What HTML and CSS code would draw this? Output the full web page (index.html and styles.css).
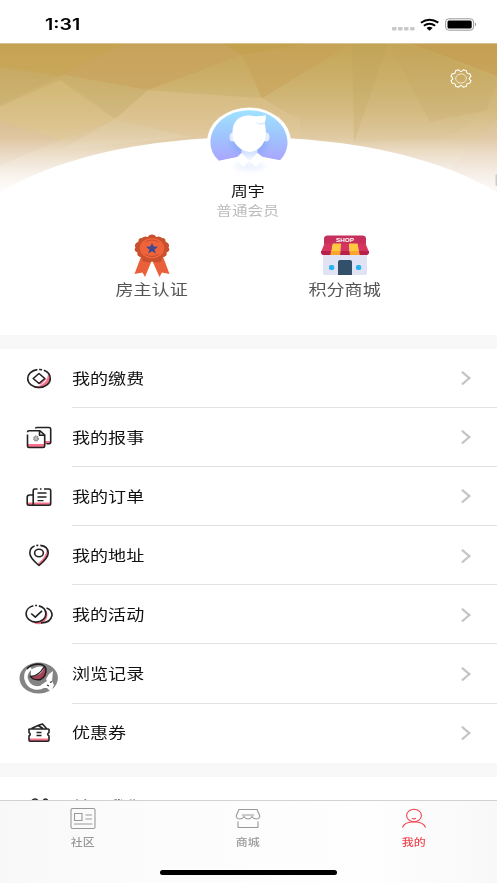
FILE: index.html
```html
<!DOCTYPE html>
<html lang="zh-CN">
<head>
<meta charset="utf-8">
<title>我的</title>
<link rel="stylesheet" href="styles.css">
</head>
<body>
<div class="screen">
  <div class="status">
    <span class="time">1:31</span>
    <svg class="status-icons" width="86" height="14" viewBox="0 0 86 14">
      <g fill="#c9c9c9"><rect x="0" y="9" width="4.6" height="3.4" rx="1"/><rect x="6" y="9" width="4.6" height="3.4" rx="1"/><rect x="12" y="9" width="4.6" height="3.4" rx="1"/><rect x="18" y="9" width="4.6" height="3.4" rx="1"/></g>
      <g fill="none" stroke="#000" stroke-width="2"><path d="M28.9 4.7Q37.500 -1.200 46.300 4.700"/><path d="M31.900 7.800Q37.500 3.600 43.200 7.800"/></g>
      <path d="M34.500 10Q37.500 7.600 40.600 10L37.500 12.700Z"/>
      <rect x="53.600" y=".8" width="28" height="11.400" rx="3.200" fill="#fff" stroke="#999" stroke-width="1"/>
      <rect x="55.500" y="2.500" width="24.200" height="8" rx="1.500"/>
      <path d="M83 4.600Q85.300 6.500 83 8.400Z" fill="#999"/>
    </svg>
  </div>

  <section class="profile">
    <svg class="cover" width="497" height="150" viewBox="0 43 497 150">
      <defs>
        <linearGradient id="gold" x1="0" y1="0" x2="0" y2="1">
          <stop offset="0" stop-color="#c5a557"/><stop offset=".25" stop-color="#ccb06a"/><stop offset=".45" stop-color="#d4bb82"/><stop offset=".62" stop-color="#dfc9a0"/><stop offset=".8" stop-color="#ebdcc8"/><stop offset="1" stop-color="#fcf9f7"/>
        </linearGradient>
        <linearGradient id="fade" x1="0" y1="0" x2="0" y2="1"><stop offset="0" stop-color="#fff" stop-opacity="0"/><stop offset="1" stop-color="#fff" stop-opacity=".7"/></linearGradient>
      </defs>
      <rect y="43" width="497" height="150" fill="url(#gold)"/>
      <path d="M0 43H126L60 76 0 67Z" fill="#c59f4b" opacity=".45"/>
      <path d="M126 43H222L242 55 148 90 60 74Z" fill="#c8a05c" opacity=".55"/>
      <path d="M222 43H305L242 55Z" fill="#bf9c43" opacity=".5"/>
      <path d="M352 43H305L242 55 262 98Z" fill="#c79f55" opacity=".5"/>
      <path d="M0 67 60 76 0 106Z" fill="#c3a663" opacity=".3"/>
      <path d="M60 80 115 120 60 140 0 121V107Z" fill="#dfc58a" opacity=".35"/>
      <path d="M60 76 148 90 115 119Z" fill="#c8ae72" opacity=".35"/>
      <path d="M148 90 242 97 262 98 300 120V137H190L115 119Z" fill="#e6c9a0" opacity=".32"/>
      <path d="M0 121 60 140 0 165Z" fill="#dab79a" opacity=".2"/>
      <path d="M115 119 190 137 60 150Z" fill="#fff" opacity=".1"/>
      <path d="M352 43H388L354 143Z" fill="#b99f55" opacity=".22"/>
      <path d="M388 43 487 110 450 138 354 143Z" fill="#d2b777" opacity=".08"/>
      <path d="M410 43H497V76Z" fill="#c3964b" opacity=".4"/>
      <path d="M388 43 430 122 487 110 497 80 425 50Z" fill="#bda15c" opacity=".17"/>
      <path d="M497 120V192L450 170Z" fill="#e5cab8" opacity=".2"/>
      <rect y="138" width="497" height="55" fill="url(#fade)"/>
      <ellipse cx="248.500" cy="263" rx="300" ry="126" fill="#fff"/>
      <rect x="495.500" y="174" width="3" height="12" rx="1.500" fill="#ccc"/>
      <rect y="43" width="497" height=".6" fill="#e5d9bb"/>
    </svg>
    <svg class="gear" width="22" height="19" viewBox="0 0 22 19" fill="none" stroke="#fff">
      <path stroke-width="1.100" stroke-linejoin="round" d="M13.400 .8L16.400 1.800Q16.200 4.900 19.800 4.800L21 7.400Q17.200 9.500 21 11.600L19.800 14.200Q16.200 14.100 16.400 17.200L13.400 18.200Q11 14.700 8.600 18.200L5.600 17.200Q5.800 14.100 2.200 14.200L1 11.600Q4.800 9.500 1 7.400L2.200 4.800Q5.800 4.900 5.600 1.800L8.600 .8Q11 4.300 13.400 .8Z"/>
      <ellipse cx="11" cy="9.500" rx="5.300" ry="4.600" stroke-width=".7"/>
    </svg>
    <svg class="avatar" width="84" height="70" viewBox="0 0 84 70">
      <defs>
        <linearGradient id="blue" x1="0" y1="0" x2="0" y2="1"><stop offset="0" stop-color="#a0e2ff"/><stop offset=".5" stop-color="#9fc5fd"/><stop offset="1" stop-color="#aaa5ff"/></linearGradient>
        <linearGradient id="shade" x1="0" y1="0" x2="0" y2="1"><stop offset="0" stop-color="#c9d9ff"/><stop offset="1" stop-color="#fff"/></linearGradient>
        <filter id="soft" x="-50%" y="-50%" width="200%" height="200%"><feGaussianBlur stdDeviation="2.500"/></filter>
      </defs>
      <ellipse cx="42" cy="35" rx="42" ry="34.500" fill="#fff"/>
      <path d="M12 53.800C6 48 3.500 42 3.500 35.500C3.500 18 20.500 3.300 42 3.300S80.500 18 80.500 35.500C80.500 42 78 48 73 53.300L51 49H35Z" fill="url(#blue)"/>
      <ellipse cx="42.500" cy="35" rx="18" ry="15" fill="#759df5" opacity=".4" filter="url(#soft)"/>
      <path d="M12 54 32 50 35 46H50L54 50 73 53.500 56 68H28Z" fill="#fff"/>
      <ellipse cx="42.500" cy="59" rx="15" ry="5" fill="#dfe9ff" opacity=".55" filter="url(#soft)"/>
      <path d="M34.500 42H50.500V49L42.500 56 34.500 49Z" fill="url(#shade)"/>
      <path d="M34.500 46 42.500 54 36 60 29 51ZM50.500 46 42.500 54 49 60 57 51Z" fill="#fff"/>
      <ellipse cx="26" cy="30" rx="3.500" ry="4.500" fill="#e3edff"/><ellipse cx="59" cy="30" rx="3.500" ry="4.500" fill="#e3edff"/>
      <path d="M25.500 25C26 13 33 8 43 8.500C49 9.500 54 9.500 58.500 8C59.500 12 58 14.500 57.500 15.500C60.500 27 59 36 51 42Q42.500 48 34 42C27 37 25 31 25.500 25Z" fill="#fff"/>
      <path d="M48 15Q53 17 57.500 15L58 17Q52 19 48 15Z" fill="#dcecff"/>
    </svg>
    <p class="name"><span class="wide">周宇</span></p>
    <p class="level"><span class="wide">普通会员</span></p>
    <div class="shortcuts">
      <div class="shortcut">
        <svg width="48" height="44" viewBox="0 0 48 44">
          <path d="M14 20 6.500 40 14.500 38.500 17 43 24 26 31.500 43 34 38.500 41.500 40 34 20Z" fill="#ea603a"/>
          <path d="M15.500 22 14 27Q19 29 22.500 28L24 25 26 28Q30 29 34 27L32 22Z" fill="#c8502f"/>
          <path d="M24 .5Q27.500 .5 28 3Q32 1.500 34 4Q38 4 37.500 7.500Q42.500 10 40.500 13.500Q43 17 38.500 18.500Q39.500 22.500 35 23Q32.500 27 28 26Q24 29.500 20 26Q15.500 27 13 23Q8.500 22.500 9.500 18.500Q5 17 7.500 13.500Q5.500 10 10.500 7.500Q10 4 14 4Q16 1.500 20 3Q20.500 .5 24 .5Z" fill="#c94f2d"/>
          <ellipse cx="24" cy="14.200" rx="12.200" ry="10.300" fill="#ee6339"/>
          <path d="M17.500 8Q24 4 30.500 8M17.500 20.500Q24 24.500 30.500 20.500" fill="none" stroke="#c94f2d" stroke-width="1"/>
          <path d="M24 9 25.600 12.500 30 12.800 26.600 15.500 27.700 19.500 24 17.200 20.300 19.500 21.400 15.500 18 12.800 22.400 12.500Z" fill="#3c4a94"/>
        </svg>
        <span class="wide">房主认证</span>
      </div>
      <div class="shortcut">
        <svg width="48" height="44" viewBox="0 0 48 44">
          <path d="M2 20H46V39Q46 41 44 41H4Q2 41 2 39Z" fill="#e1e2f3"/>
          <path d="M6 1.500H42Q44.500 1.500 45 4V10H3V4Q3.500 1.500 6 1.500Z" fill="#c7305c"/>
          <path d="M3.500 9.500H12L10 21H3Q0 21 0 18Z" fill="#d5355f"/><path d="M12 9.500H20L19 21H9.500Z" fill="#ffc83f"/><path d="M20 9.500H28L29 21H19Z" fill="#d5355f"/><path d="M28 9.500H36.500L38.500 21H29Z" fill="#ffc83f"/><path d="M36.500 9.500H44.500L48 18Q48 21 45 21H38.500Z" fill="#d5355f"/>
          <path d="M0 17H10L9.500 21H3Q0 21 0 17M19.500 17H28.500L29 21H19ZM38 17H48Q48 21 45 21H38.500Z" fill="#b71f4c"/><path d="M10 17H19.500L19 21H9.500ZM28.500 17H38L38.500 21H29Z" fill="#f8a52b"/>
          <path d="M17 41V28Q17 26 19 26H29Q31 26 31 28V41Z" fill="#32506a"/>
          <rect x="8" y="31" width="5.200" height="5" rx="1.800" fill="#26b5ef"/><rect x="35" y="31" width="5.200" height="5" rx="1.800" fill="#26b5ef"/>
          <text x="24" y="7.600" class="shop" textLength="18" lengthAdjust="spacingAndGlyphs">SHOP</text>
        </svg>
        <span class="wide">积分商城</span>
      </div>
    </div>
  </section>

  <main class="menu">
    <div class="row"><div class="ico"><svg width="40" height="34" viewBox="0 0 40 34"><path d="M29 11Q34 19 27 24Q21 28 15 25Q29 23 29 11Z" fill="#f6718a"/><ellipse class="ln" cx="20" cy="16.500" rx="11.300" ry="9" stroke-dasharray="46 1.800 3 1.800"/><path d="M21 22 26.500 16.500" stroke="#f6718a" stroke-width="2"/><path class="ln" d="M20 11.500 25.800 16.500 20 21.500 14.200 16.500Z"/></svg></div><div class="cell"><span class="wide">我的缴费</span><i class="chev"></i></div></div>
    <div class="row"><div class="ico"><svg width="40" height="34" viewBox="0 0 40 34"><path d="M9 23H25V26.500H9ZM26 20H31V23H26Z" fill="#f6718a"/><path class="ln" d="M16.500 7.500V7.200Q16.500 6.500 18 6.500H30Q31.700 6.500 31.700 8V21.500Q31.700 22.800 30 22.800H27.500M8.500 13.500V25Q8.500 26.500 10 26.500H24Q25.700 26.500 25.700 25V14L21 9.800H10Q8.500 9.800 8.500 11.200M20.500 9.800V14.300H25.700"/><circle cx="17" cy="17.500" r="2.300" fill="#bbb" stroke="#777" stroke-width="1.300" stroke-dasharray="1.200 .6"/></svg></div><div class="cell"><span class="wide">我的报事</span><i class="chev"></i></div></div>
    <div class="row"><div class="ico"><svg width="40" height="34" viewBox="0 0 40 34"><path d="M9 22.500H31V25H9Z" fill="#f6718a"/><path class="ln" d="M14.200 15H10.500Q8.200 15 8.200 17.500V23.500Q8.200 25.200 10 25.200H30Q31.700 25.200 31.700 23.500V10.500Q31.700 9 30 9H25M22.500 9H21M18.500 9H15.800Q14.200 9 14.200 10.500V25"/><path class="ln thin" d="M18.500 13H27.500M18.500 17H27.500M18.500 20.700H24.500"/></svg></div><div class="cell"><span class="wide">我的订单</span><i class="chev"></i></div></div>
    <div class="row"><div class="ico"><svg width="40" height="34" viewBox="0 0 40 34"><path d="M28 10Q30 16 25 22L20 27 19 24.500Q27 18 28 10Z" fill="#f6718a"/><path class="ln" d="M20 26.500Q10.800 19 10.800 14Q11 6.500 20 6.300Q29 6.500 29.200 14Q29.200 19 20 26.500Z" stroke-dasharray="25 1.800 2 1.800 60"/><ellipse class="ln" cx="20" cy="14" rx="4.400" ry="3.700"/></svg></div><div class="cell"><span class="wide">我的地址</span><i class="chev"></i></div></div>
    <div class="row"><div class="ico"><svg width="40" height="34" viewBox="0 0 40 34"><path d="M26 12Q28 19 22 23Q18 25 12 23.500Q22 30 27.500 21Q30 14 26 12Z" fill="#f6718a"/><ellipse class="ln" cx="17" cy="15.800" rx="9.900" ry="8.300" stroke-dasharray="40 1.800 2 1.800"/><path class="ln" d="M12.200 15.500 16.300 19.200 23 12.800M27.500 10Q33 11.500 33 17.500Q31.500 25 22 24.900"/></svg></div><div class="cell"><span class="wide">我的活动</span><i class="chev"></i></div></div>
    <div class="row"><div class="ico history"><svg width="40" height="34" viewBox="0 0 40 34"><ellipse cx="19.700" cy="17" rx="19.200" ry="15.500" fill="#848484"/><path d="M12 7Q6 11 7 17.500Q9 25 15 26.500Q20 28 25 25" fill="none" stroke="#fff" stroke-width="3.600"/><path d="M12 9Q18 4 25 6L24 12 12 16Z" fill="#fff"/><path d="M22 24 28 20 27 18 30 13 34 10 33 20 35 24 32 31 28 27 21 27Z" fill="#fff"/><path d="M11.500 15.500Q22 16 26 5.500Q30 14 23 18.500Q15 20 11.500 15.500Z" fill="#a34457"/><path d="M8 8Q11 4 18 3Q26 3 27 8Q27.500 15 21.500 18.500Q14 19.500 11.500 15.500Q20 15 25 6" fill="none" stroke="#211b1e" stroke-width="1.400"/><path d="M31 21.500 33 20.500M28 24 30 25" stroke="#333" stroke-width="1.200"/></svg></div><div class="cell"><span class="wide">浏览记录</span><i class="chev"></i></div></div>
    <div class="row last"><div class="ico"><svg width="40" height="34" viewBox="0 0 40 34"><path d="M10 22.500H30V25.300H10Z" fill="#f6718a"/><path class="ln" d="M10 14Q9.500 13 10.500 13H29Q30.500 13 30 14.500V16.500Q27.500 18.300 30 20V24Q30 25.300 28.500 25.300H11Q10 25.300 10 24V20Q12.500 18.300 10 16.500ZM12.500 12.500 19 9.500 24 12.500M19 9.500 23.500 8 27.500 12.500"/><path class="ln thin" d="M17.500 16.500H22.500M17.500 19.500H22.500"/></svg></div><div class="cell"><span class="wide">优惠券</span><i class="chev"></i></div></div>
  </main>
  <div class="more">
    <div class="row last"><div class="ico"><svg width="40" height="34" viewBox="0 0 40 34"><ellipse class="ln" cx="16" cy="15" rx="4" ry="5"/><ellipse class="ln" cx="26.500" cy="15" rx="3" ry="5"/></svg></div><div class="cell"><span class="wide">关于我们</span></div></div>
  </div>

  <nav class="tabs">
    <a class="tab"><svg width="28" height="24" viewBox="0 0 28 24"><rect x="2" y="2.500" width="24" height="20" rx="1.500"/><path d="M5.500 7.500H13V14.500H5.500ZM16.500 9H23M16.500 13H23M5 18H23.500"/></svg><span class="wide">社区</span></a>
    <a class="tab"><svg width="28" height="24" viewBox="0 0 28 24"><path d="M5 3.500H23L25.500 9Q26.500 12.500 22.500 13Q19.500 13 18 10.500Q16.500 13 14 13Q11.500 13 10 10.500Q8.500 13 5.500 13Q1.500 12.500 2.500 9ZM8 9H20M4 15.500V21.500H24V15.500" stroke-linejoin="round"/></svg><span class="wide">商城</span></a>
    <a class="tab on"><svg width="28" height="24" viewBox="0 0 28 24"><ellipse cx="14" cy="9.500" rx="7.400" ry="6.200"/><path d="M2.500 21.500Q4 16 14 15.700Q24 16 25.500 21.500M12 12.200Q14 13.500 16 12.200"/></svg><span class="wide">我的</span></a>
    <div class="home"></div>
  </nav>
</div>
</body>
</html>
```

FILE: styles.css
```css
* { box-sizing: border-box; }
body {
  margin: 0;
  background: #fff;
  font-family: "Noto Sans CJK SC", sans-serif;
}
.screen {
  position: relative;
  width: 497px;
  height: 883px;
  overflow: hidden;
  background: #fff;
}
.wide {
  display: inline-block;
  transform: scaleX(1.22);
  white-space: nowrap;
}
.status {
  height: 43px;
  display: flex;
  justify-content: space-between;
  padding: 15px 19.5px 0 44.5px;
}
.time {
  font: 600 15.5px/20px Inter, sans-serif;
  transform: scaleX(1.26);
  transform-origin: left;
}
.status-icons { margin-top: 3px; }
.profile {
  position: relative;
  height: 292px;
  display: flex;
  flex-direction: column;
  align-items: center;
}
.cover { position: absolute; left: 0; top: 0; }
.gear { position: absolute; left: 450px; top: 25.5px; }
.avatar {
  position: relative;
  flex: none;
  margin: 64px 0 0;
}
.name, .level {
  position: relative;
  margin: 0;
  text-align: center;
}
.name { margin-top: 3px; font-size: 13.8px; line-height: 20px; color: #111; }
.level { font-size: 12.8px; line-height: 20px; color: #bbb; }
.name .wide, .level .wide { margin-right: 1px; }
.shortcuts {
  width: 386px;
  display: grid;
  grid-template-columns: 1fr 1fr;
  margin-top: 14px;
}
.shortcut {
  display: flex;
  flex-direction: column;
  align-items: center;
  font-size: 14.8px;
  line-height: 22px;
  color: #555;
}
.shop {
  fill: #fff;
  font: bold 6px "Liberation Sans", sans-serif;
  text-anchor: middle;
}
.menu {
  border-top: 14px solid #f8f8f8;
  border-bottom: 14px solid #f8f8f8;
}
.row { display: flex; height: 59.1px; }
.row.last { height: 59px; }
.ico {
  width: 72px;
  padding-left: 19px;
  display: flex;
  align-items: center;
}
.history { padding-top: 7px; }
.ln {
  fill: none;
  stroke: #222;
  stroke-width: 1.6;
  stroke-linejoin: round;
}
.thin { stroke-width: 1.3; }
.cell {
  flex: 1;
  display: flex;
  align-items: center;
  justify-content: space-between;
  padding: 0 29px 0 0;
  border-bottom: 1px solid #e2e2e2;
  font-size: 14.8px;
  color: #111;
}
.cell .wide { transform-origin: left; margin-bottom: 1.5px; }
.last .cell { border-bottom-color: transparent; }
.more .cell { padding-top: 2px; }
.chev {
  width: 9.5px;
  height: 9.5px;
  border: solid #c3c3c8;
  border-width: 2px 2px 0 0;
  transform: translateX(-1px) scaleX(1.15) rotate(45deg);
}
.tabs {
  position: absolute;
  left: 0;
  bottom: 0;
  width: 100%;
  height: 83px;
  display: grid;
  grid-template-columns: repeat(3, 1fr);
  align-items: start;
  padding-top: 5px;
  border-top: 1px solid #d2d2d2;
  background: linear-gradient(90deg, #f8f8f8, #fcfcfc 30%, #fefefe 75%, #f8f8f8);
}
.tab {
  display: flex;
  flex-direction: column;
  align-items: center;
  font-size: 9.8px;
  font-weight: 500;
  line-height: 14px;
  color: #999;
}
.tab svg { fill: none; stroke: currentColor; stroke-width: 1.1; }
.tab .wide { margin: 4.5px 1px 0 0; }
.tab.on { color: #f04450; }
.home {
  position: absolute;
  left: 160px;
  top: 69px;
  width: 177px;
  height: 5px;
  border-radius: 3px;
  background: #000;
}
```
